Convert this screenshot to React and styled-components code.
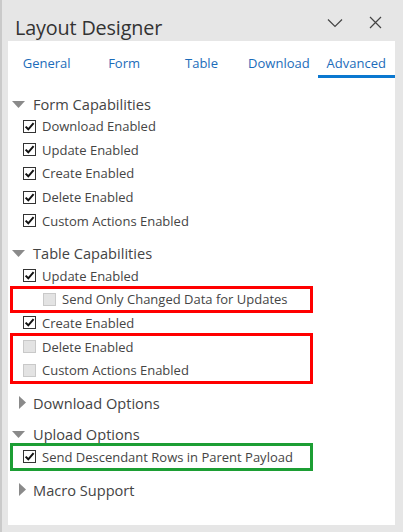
import React from 'react';
import styled, { createGlobalStyle } from 'styled-components';

const GlobalStyle = createGlobalStyle`
  html, body {
    margin: 0;
    padding: 0;
    background: #e6e6e6;
  }
  body {
    font-family: "Open Sans", "Noto Sans", sans-serif;
    color: #444;
  }
`;

const Pane = styled.div`
  width: 403px;
  height: 532px;
  box-sizing: border-box;
  border-left: 2px solid #cacaca;
  padding-left: 6px;
  padding-right: 8px;
  display: flex;
  flex-direction: column;
`;

const TitleBar = styled.div`
  height: 41px;
  display: flex;
  align-items: center;
  padding-left: 7px;
  padding-top: 4px;
  box-sizing: border-box;
`;

const Title = styled.h1`
  flex: 1;
  margin: 0;
  padding-top: 9px;
  font-size: 19.8px;
  font-weight: 400;
  color: #333;
  letter-spacing: -0.15px;
`;

const IconButton = styled.button`
  border: 0;
  background: none;
  padding: 0;
  width: 40px;
  height: 30px;
  display: flex;
  align-items: center;
  justify-content: center;
  color: #444;
`;

const Panel = styled.div`
  background: #fff;
  height: 484px;
  display: flex;
  flex-direction: column;
`;

const Tabs = styled.div`
  display: grid;
  grid-template-columns: repeat(5, 1fr);
  height: 37px;
`;

const Tab = styled.div`
  display: flex;
  align-items: center;
  justify-content: center;
  padding-top: 10px;
  font-size: 13px;
  color: #1c6cba;
  border-bottom: 3px solid ${p => (p.$active ? '#0b78d0' : 'transparent')};
`;

const Content = styled.div`
  padding: 15.5px 0 0 4px;
`;

const Section = styled.div`
  & + & {
    margin-top: 10.5px;
  }
`;

const Header = styled.div`
  height: 21px;
  display: flex;
  align-items: center;
  font-size: 14.6px;
  color: #444;
`;

const Arrow = styled.span`
  width: 21px;
  display: flex;
  align-items: center;
  justify-content: ${p => (p.$open ? 'flex-start' : 'center')};
`;

const Row = styled.div`
  height: 23.6px;
  display: flex;
  align-items: center;
  padding-left: ${p => p.$indent}px;
  font-size: 13px;
  color: #454545;
`;

const Box = styled.span`
  width: 13px;
  height: 13px;
  box-sizing: border-box;
  border: 1px solid ${p => (p.$disabled ? '#c9c9c9' : '#333')};
  background: ${p => (p.$disabled ? '#e3e3e3' : '#fff')};
  margin-right: 6px;
  display: flex;
  align-items: center;
  justify-content: center;
`;

const Highlight = styled.div`
  width: 299px;
  outline: 3px solid ${p => p.$color};
  outline-offset: -1px;
`;

function Chevron() {
  return (
    <svg width="16" height="10" viewBox="0 0 16 10">
      <path d="M1 1.5 L8 8.5 L15 1.5" fill="none" stroke="#444" strokeWidth="1.2" />
    </svg>
  );
}

function Close() {
  return (
    <svg width="13" height="13" viewBox="0 0 13 13">
      <path d="M1 1 L12 12 M12 1 L1 12" fill="none" stroke="#444" strokeWidth="1.2" />
    </svg>
  );
}

function Triangle({ open }) {
  if (open) {
    return (
      <svg width="13" height="7" viewBox="0 0 13 7">
        <path d="M0 0 L13 0 L6.5 7 Z" fill="#8a8a8a" />
      </svg>
    );
  }
  return (
    <svg width="7" height="13" viewBox="0 0 7 13">
      <path d="M0 0 L7 6.5 L0 13 Z" fill="#8a8a8a" />
    </svg>
  );
}

function Check({ label, checked, disabled, indent = 11 }) {
  return (
    <Row $indent={indent}>
      <Box $disabled={disabled}>
        {checked && (
          <svg width="11" height="11" viewBox="0 0 11 11">
            <path d="M1.6 5.6 L4.3 8.3 L9.6 2.2" fill="none" stroke="#111" strokeWidth="2" />
          </svg>
        )}
      </Box>
      {label}
    </Row>
  );
}

function Group({ title, open, children }) {
  return (
    <Section>
      <Header>
        <Arrow $open={open}>
          <Triangle open={open} />
        </Arrow>
        {title}
      </Header>
      {open && children}
    </Section>
  );
}

export default function App() {
  return (
    <>
      <GlobalStyle />
      <Pane>
        <TitleBar>
          <Title>Layout Designer</Title>
          <IconButton><Chevron /></IconButton>
          <IconButton><Close /></IconButton>
        </TitleBar>
        <Panel>
          <Tabs>
            <Tab>General</Tab>
            <Tab>Form</Tab>
            <Tab>Table</Tab>
            <Tab>Download</Tab>
            <Tab $active>Advanced</Tab>
          </Tabs>
          <Content>
            <Group title="Form Capabilities" open>
              <Check label="Download Enabled" checked />
              <Check label="Update Enabled" checked />
              <Check label="Create Enabled" checked />
              <Check label="Delete Enabled" checked />
              <Check label="Custom Actions Enabled" checked />
            </Group>
            <Group title="Table Capabilities" open>
              <Check label="Update Enabled" checked />
              <Highlight $color="#f00">
                <Check label="Send Only Changed Data for Updates" disabled indent={31} />
              </Highlight>
              <Check label="Create Enabled" checked />
              <Highlight $color="#f00">
                <Check label="Delete Enabled" disabled />
                <Check label="Custom Actions Enabled" disabled />
              </Highlight>
            </Group>
            <Group title="Download Options" />
            <Group title="Upload Options" open>
              <Highlight $color="#1c9e34">
                <Check label="Send Descendant Rows in Parent Payload" checked />
              </Highlight>
            </Group>
            <Group title="Macro Support" />
          </Content>
        </Panel>
      </Pane>
    </>
  );
}
